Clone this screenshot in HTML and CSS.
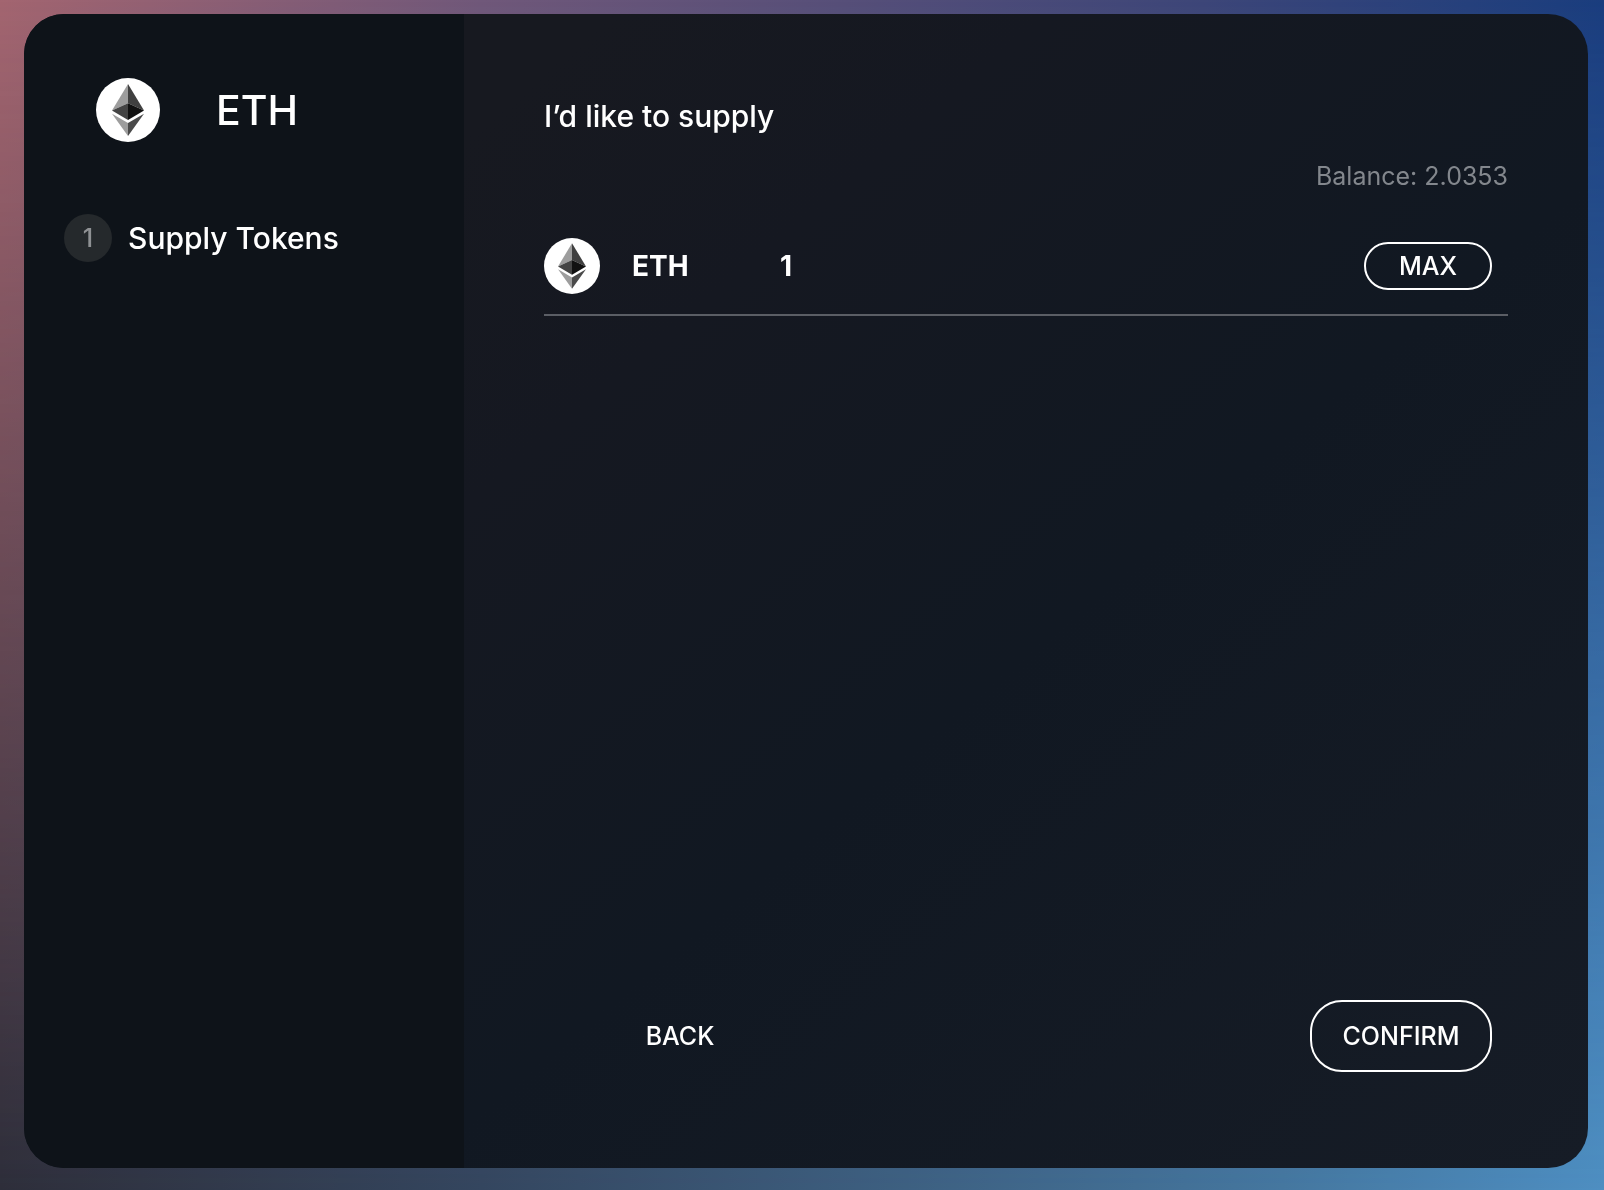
FILE: index.html
```
<!DOCTYPE html>
<html lang="en">
<head>
    <meta charset="utf-8">
    <title>Supply ETH</title>
    <link rel="stylesheet" href="styles.css">
</head>
<body>
    <svg class="symbols" aria-hidden="true">
        <symbol id="eth" viewBox="0 0 64 64">
            <circle cx="32" cy="32" r="32" fill="#fff"/>
            <path d="M32 6L16 32.5L32 25.2z" fill="#9d9d9d"/>
            <path d="M32 6L48 32.5L32 25.2z" fill="#404040"/>
            <path d="M16 32.5L32 25.2V42z" fill="#444"/>
            <path d="M48 32.5L32 25.2V42z" fill="#111"/>
            <path d="M16 35.8L32 45V58z" fill="#9d9d9d"/>
            <path d="M48 35.8L32 45V58z" fill="#4a4a4a"/>
        </symbol>
    </svg>

    <div class="modal">
        <aside class="sidebar">
            <div class="asset">
                <svg class="asset-icon"><use href="#eth"/></svg>
                <h1>ETH</h1>
            </div>
            <ol class="steps">
                <li><span class="step-number">1</span>Supply Tokens</li>
            </ol>
        </aside>

        <form class="content">
            <h2>I’d like to supply</h2>
            <p class="balance">Balance: 2.0353</p>
            <div class="amount-row">
                <svg class="token-icon"><use href="#eth"/></svg>
                <label for="amount">ETH</label>
                <input id="amount" type="text" inputmode="decimal" value="1">
                <button type="button" class="max">MAX</button>
            </div>
            <div class="actions">
                <button type="button" class="back">BACK</button>
                <button type="button" class="confirm">CONFIRM</button>
            </div>
        </form>
    </div>
</body>
</html>
```
FILE: styles.css
```
* {box-sizing: border-box;}

body {
    margin: 0;
    min-height: 100vh;
    display: flex;
    padding: 14px 16px 22px 24px;
    background: linear-gradient(to right, #a36570, #70587a 30%, #3d4678 75%, #1a3d7e);
    color: #fff;
    font-family: Inter, "Liberation Sans", sans-serif;
    font-size: 30px;
    font-weight: 500;
}

/* second gradient fades in towards the bottom of the window */
body::before {
    content: "";
    position: fixed;
    inset: 0;
    z-index: -1;
    background: linear-gradient(to right, #2d2e3a, #34465f 30%, #4577a0 80%, #4e8fc2);
    -webkit-mask-image: linear-gradient(to bottom, transparent, #000);
    mask-image: linear-gradient(to bottom, transparent, #000);
}

h1, h2, p, ol {margin: 0; padding: 0;}
svg {display: block; flex: none;}
button, input {font: inherit; color: inherit; background: none; border: 0;}
button {cursor: pointer;}

.symbols {position: absolute; width: 0; height: 0;}

.modal {
    flex: 1;
    display: flex;
    overflow: hidden;
    border-radius: 40px;
    background: linear-gradient(140deg, #171920 20%, #151821 35%, #111822 60%, #161c26);
}

.sidebar {
    width: 440px;
    flex: none;
    padding: 64px 40px;
    background: #0e1319;
}
.asset {
    display: flex;
    align-items: center;
    gap: 56px;
    padding-left: 32px;
}
.asset-icon {width: 64px; height: 64px;}
.asset h1 {
    font-size: 41px;
    line-height: 64px;
    font-weight: 500;
}
.steps {margin-top: 72px; list-style: none;}
.steps li {
    display: flex;
    align-items: center;
    gap: 16px;
    line-height: 48px;
}
.step-number {
    width: 48px;
    height: 48px;
    border-radius: 50%;
    background: #25292c;
    color: #8f9194;
    font-size: 25px;
    text-align: center;
}

.content {
    flex: 1;
    display: flex;
    flex-direction: column;
    padding: 80px;
}
.content h2 {
    font-size: 30px;
    line-height: 44px;
    font-weight: 500;
}
.balance {
    margin-top: 20px;
    color: #83878d;
    font-size: 25px;
    line-height: 36px;
    font-weight: 400;
    text-align: right;
}
.amount-row {
    display: flex;
    align-items: center;
    margin-top: 44px;
    padding: 0 16px 20px 0;
    border-bottom: 2px solid #5b5e65;
    font-size: 28px;
    font-weight: 700;
}
.token-icon {width: 56px; height: 56px;}
.amount-row label {width: 144px; margin-left: 32px;}
.amount-row input {
    flex: 1;
    min-width: 0;
    padding: 0 4px;
    outline: 0;
}
.max, .back, .confirm {
    padding: 0;
    font-size: 25px;
    font-weight: 500;
}
.max, .confirm {border: 2px solid #fff;}
.max {
    width: 128px;
    height: 48px;
    border-radius: 24px;
}
.actions {
    display: flex;
    justify-content: space-between;
    margin-top: auto;
    padding: 0 16px 16px;
}
.back, .confirm {height: 72px;}
.back {width: 240px;}
.confirm {
    width: 182px;
    border-radius: 32px;
}
```
